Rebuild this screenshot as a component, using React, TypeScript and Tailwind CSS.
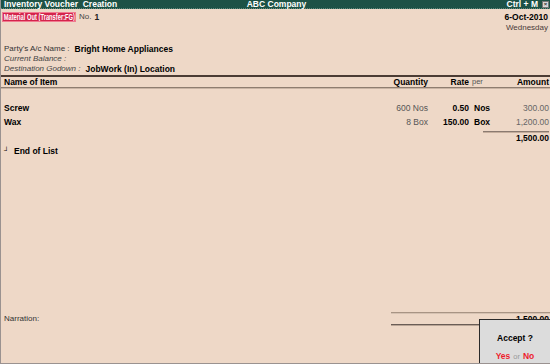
import React from "react";

const items = [
    { name: "Screw", qty: "600 Nos", rate: "0.50", per: "Nos", amount: "300.00" },
    { name: "Wax", qty: "8 Box", rate: "150.00", per: "Box", amount: "1,200.00" },
];

export default function App() {
    return (
        <div
            className="relative w-[550px] h-[364px] bg-[#eed8c7] border-l border-b border-[#9a9290] flex flex-col text-[8px] text-[#222] overflow-hidden"
            style={{ fontFamily: "'Liberation Sans', Arial, sans-serif" }}
        >
            {/* Title bar */}
            <div className="h-[9px] bg-[#1d5246] border-b border-dotted border-[#5f8a7c] flex items-center text-white font-bold text-[8.5px] leading-none">
                <div className="flex-1 pl-[3px]">Inventory Voucher&nbsp; Creation</div>
                <div className="w-[120px] text-center">ABC Company</div>
                <div className="flex-1 flex justify-end items-center pr-[1px]">
                    <span className="mr-[4px]">Ctrl + M</span>
                    <span className="w-[7px] h-[7px] bg-[#d8d8d8] border border-[#777] flex items-center justify-center text-[#333] text-[6px] leading-none">
                        ×
                    </span>
                </div>
            </div>

            {/* Voucher header */}
            <div className="mt-[3px] h-[10px] flex items-center pr-[2px]">
                <span className="ml-[1px] w-[74px] h-[10px] bg-[#d4244c] border border-[#f07a90] overflow-hidden whitespace-nowrap flex items-center">
                    <span className="inline-block origin-left scale-x-[0.64] pl-[1px] text-white font-bold text-[9px] leading-[8px]">
                        Material Out (Transfer:FG)
                    </span>
                </span>
                <span className="ml-[3px] text-[#444]">No.</span>
                <span className="ml-[3px] font-bold text-[8.5px]">1</span>
                <span className="ml-auto font-bold text-[8.5px] text-black">6-Oct-2010</span>
            </div>
            <div className="mt-[1px] h-[10px] leading-[10px] text-right pr-[2px] text-[#4a3a3a]">Wednesday</div>

            <div className="mt-[11px] h-[10px] flex items-center pl-[3px]">
                <span className="text-[#333]">Party's A/c Name :</span>
                <span className="ml-[5px] font-bold text-[8.5px] text-black">Bright Home Appliances</span>
            </div>
            <div className="h-[10px] leading-[10px] pl-[3px] italic text-[#444]">Current Balance :</div>
            <div className="h-[10px] flex items-center pl-[3px]">
                <span className="italic text-[#444]">Destination Godown :</span>
                <span className="ml-[5px] font-bold text-[8.5px] text-black">JobWork (In) Location</span>
            </div>

            {/* Column header */}
            <div className="mt-[1px] h-[2px] bg-[#4b3c34]" />
            <div className="h-[10px] flex items-center pl-[3px] pr-[1px] font-bold text-[8.5px] text-black">
                <div className="flex-1">Name of Item</div>
                <div className="w-[60px] text-right">Quantity</div>
                <div className="w-[41px] text-right">Rate</div>
                <div className="w-[22px] pl-[3px] font-normal text-[7.5px] text-[#555]">per</div>
                <div className="w-[58px] text-right">Amount</div>
            </div>
            <div className="h-[2px] bg-[#8e7d70] border-b border-[#c9b4a4]" />

            {/* Items */}
            <div className="mt-[14px] flex flex-col gap-[4px]">
                {items.map((it) => (
                    <div key={it.name} className="h-[10px] flex items-center pl-[3px] pr-[1px]">
                        <div className="flex-1 font-bold text-[8.5px] text-black">{it.name}</div>
                        <div className="w-[60px] text-right text-[8.5px] text-[#555]">{it.qty}</div>
                        <div className="w-[41px] text-right font-bold text-[8.5px] text-black">{it.rate}</div>
                        <div className="w-[22px] pl-[5px] font-bold text-[8.5px] text-black">{it.per}</div>
                        <div className="w-[58px] text-right text-[8.5px] text-[#666]">{it.amount}</div>
                    </div>
                ))}
            </div>
            <div className="mt-[4px] flex justify-end pr-[1px]">
                <div className="w-[66px] h-[2px] bg-[#8a7a70] border-b border-[#c4ad9c]" />
            </div>
            <div className="h-[10px] flex items-center justify-end pr-[1px] font-bold text-[8.5px] text-black">1,500.00</div>

            <div className="mt-[3px] h-[10px] flex items-center pl-[3px] font-bold text-[8.5px] text-black">
                <span className="text-[7px] mr-[5px] font-normal">┘</span>
                <span>End of List</span>
            </div>

            <div className="flex-1" />

            {/* Footer */}
            <div className="flex justify-end">
                <div className="w-[159px] h-[2px] bg-[#a89484] border-b border-[#d6c2b2]" />
            </div>
            <div className="h-[10px] flex items-center pl-[3px] pr-[1px]">
                <span className="text-[#333]">Narration:</span>
                <span className="ml-auto font-bold text-[8.5px] text-black">1,500.00</span>
            </div>
            <div className="flex justify-end">
                <div className="w-[159px] h-[2px] bg-[#6a5d56] border-b border-[#b9a596]" />
            </div>
            <div className="h-[37px]" />

            {/* Accept popup */}
            <div className="absolute left-[478px] top-[319px] w-[72px] h-[45px] bg-[#dcdcdc] border border-[#2a2a2a] flex flex-col items-center">
                <div className="mt-[12px] font-bold text-[8.5px] text-black">Accept ?</div>
                <div className="mt-auto mb-[1px] text-[8.5px] font-bold leading-[10px]">
                    <span className="text-[#ee1c2e]">Yes</span>
                    <span className="mx-[3px] font-normal text-[7.5px] text-[#999]">or</span>
                    <span className="text-[#ee1c2e]">No</span>
                </div>
            </div>
        </div>
    );
}
